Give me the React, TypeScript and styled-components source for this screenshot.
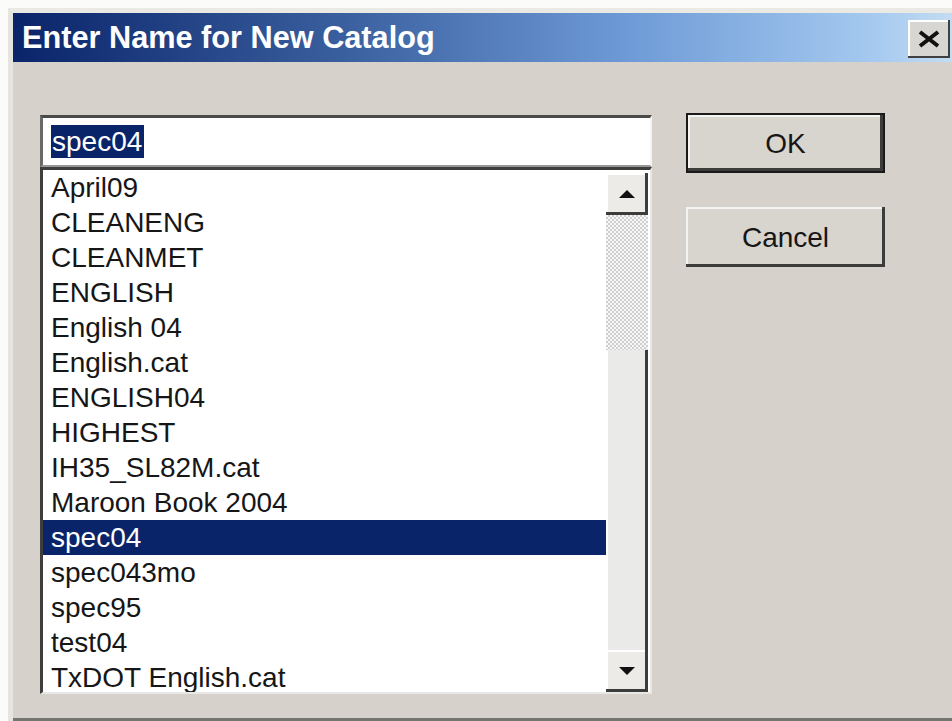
import * as React from 'react'
import styled, {createGlobalStyle} from 'styled-components'

const GlobalStyle = createGlobalStyle`
  html, body {
    margin: 0;
    padding: 0;
    background: #fbfbf9;
  }
  * {
    box-sizing: border-box;
  }
`

const catalogs = [
  'April09',
  'CLEANENG',
  'CLEANMET',
  'ENGLISH',
  'English 04',
  'English.cat',
  'ENGLISH04',
  'HIGHEST',
  'IH35_SL82M.cat',
  'Maroon Book 2004',
  'spec04',
  'spec043mo',
  'spec95',
  'test04',
  'TxDOT English.cat',
]

const Page = styled.div`
  width: 952px;
  height: 721px;
  padding: 8px 0 0 8px;
  overflow: hidden;
  font-family: "Liberation Sans", Arial, sans-serif;
`

const Window = styled.div`
  height: 100%;
  display: flex;
  flex-direction: column;
  border-top: 5px solid #ebe9e3;
  border-left: 5px solid #e6e4de;
  background: #d6d2cb;
`

const TitleBar = styled.div`
  height: 49px;
  flex: none;
  display: flex;
  align-items: center;
  justify-content: space-between;
  padding: 0 2px 0 9px;
  background: linear-gradient(to right, #0a246a 0%, #3a5f9e 35%, #6d9ad6 65%, #a6caf0 92%, #c4dcf2 100%);
`

const Title = styled.span`
  color: #fff;
  font-weight: bold;
  font-size: 30.7px;
`

const CloseButton = styled.button`
  width: 42px;
  height: 38px;
  margin-top: 3px;
  padding: 0;
  display: flex;
  align-items: center;
  justify-content: center;
  background: #d8d6d2;
  border: none;
  box-shadow: inset -2px -2px 0 #404040, inset 2px 2px 0 #fff;
`

const Body = styled.div`
  flex: 1;
  display: flex;
  gap: 34px;
  padding: 53px 0 0 27px;
  border-bottom: 3px solid #77756f;
`

const LeftColumn = styled.div`
  width: 612px;
  display: flex;
  flex-direction: column;
`

const NameField = styled.div`
  height: 52px;
  display: flex;
  align-items: center;
  padding: 0 8px;
  background: #fff;
  border-top: 3px solid #4a4a48;
  border-left: 3px solid #6a6a68;
  border-right: 2px solid #f4f4f2;
  border-bottom: 2px solid #9a9896;
`

const Selection = styled.span`
  display: inline-block;
  height: 33px;
  line-height: 33px;
  padding: 0 2px 0 1px;
  font-size: 28px;
  color: #fff;
  background: #0a246a;
`

const ListBox = styled.div`
  height: 527px;
  display: flex;
  background: #fff;
  border-top: 3px solid #3e3e3c;
  border-left: 3px solid #3e3e3c;
  border-right: 2px solid #e8e8e6;
  border-bottom: 2px solid #e8e8e6;
`

const Items = styled.div`
  flex: 1;
  overflow: hidden;
`

const Item = styled.div<{$selected?: boolean}>`
  height: 35px;
  line-height: 35px;
  padding-left: 8px;
  font-size: 28px;
  white-space: nowrap;
  color: ${p => (p.$selected ? '#fff' : '#161616')};
  background: ${p => (p.$selected ? '#0a246a' : 'transparent')};
`

const ScrollBar = styled.div`
  width: 42px;
  margin: 3px 2px 0 0;
  display: flex;
  flex-direction: column;
`

const ArrowButton = styled.div`
  height: 42px;
  flex: none;
  display: flex;
  align-items: center;
  justify-content: center;
  background: #ecebe8;
  box-shadow: inset -3px -3px 0 #3c3c3a, inset 2px 2px 0 #fff;
`

const Track = styled.div`
  height: 135px;
  flex: none;
  background-color: #f6f6f6;
  background-image: repeating-conic-gradient(#cfcfcf 0 25%, #f6f6f6 0 50%);
  background-size: 4px 4px;
`

const Thumb = styled.div`
  flex: 1;
  background: #eaeae8;
  box-shadow: inset -3px 0 0 #3c3c3a, inset 2px 0 0 #fff;
`

const Arrow = styled.span<{$down?: boolean}>`
  width: 0;
  height: 0;
  border-left: 8px solid transparent;
  border-right: 8px solid transparent;
  ${p => (p.$down ? 'border-top: 8px solid #111;' : 'border-bottom: 8px solid #111;')}
`

const ButtonColumn = styled.div`
  width: 199px;
  display: flex;
  flex-direction: column;
  gap: 34px;
  margin-top: -2px;
`

const DialogButton = styled.button<{$default?: boolean}>`
  height: 60px;
  padding: 2px 0 0;
  font-family: "Liberation Sans", Arial, sans-serif;
  font-size: 28px;
  color: #161616;
  background: #d8d4ce;
  border: ${p => (p.$default ? '2px solid #1a1a1a' : 'none')};
  box-shadow: inset -3px -3px 0 #3c3c3a, inset 2px 2px 0 #f4f4f2;
`

const App = () => {
  const selected = 'spec04'
  return (
    <>
      <GlobalStyle />
      <Page>
        <Window>
          <TitleBar>
            <Title>Enter Name for New Catalog</Title>
            <CloseButton aria-label="Close">
              <svg width="24" height="18" viewBox="0 0 24 18">
                <path d="M3 2 L21 16 M21 2 L3 16" stroke="#111" strokeWidth="4" />
              </svg>
            </CloseButton>
          </TitleBar>
          <Body>
            <LeftColumn>
              <NameField>
                <Selection>{selected}</Selection>
              </NameField>
              <ListBox>
                <Items>
                  {catalogs.map(name => (
                    <Item key={name} $selected={name === selected}>
                      {name}
                    </Item>
                  ))}
                </Items>
                <ScrollBar>
                  <ArrowButton>
                    <Arrow />
                  </ArrowButton>
                  <Track />
                  <Thumb />
                  <ArrowButton>
                    <Arrow $down />
                  </ArrowButton>
                </ScrollBar>
              </ListBox>
            </LeftColumn>
            <ButtonColumn>
              <DialogButton $default>OK</DialogButton>
              <DialogButton>Cancel</DialogButton>
            </ButtonColumn>
          </Body>
        </Window>
      </Page>
    </>
  )
}

export default App
